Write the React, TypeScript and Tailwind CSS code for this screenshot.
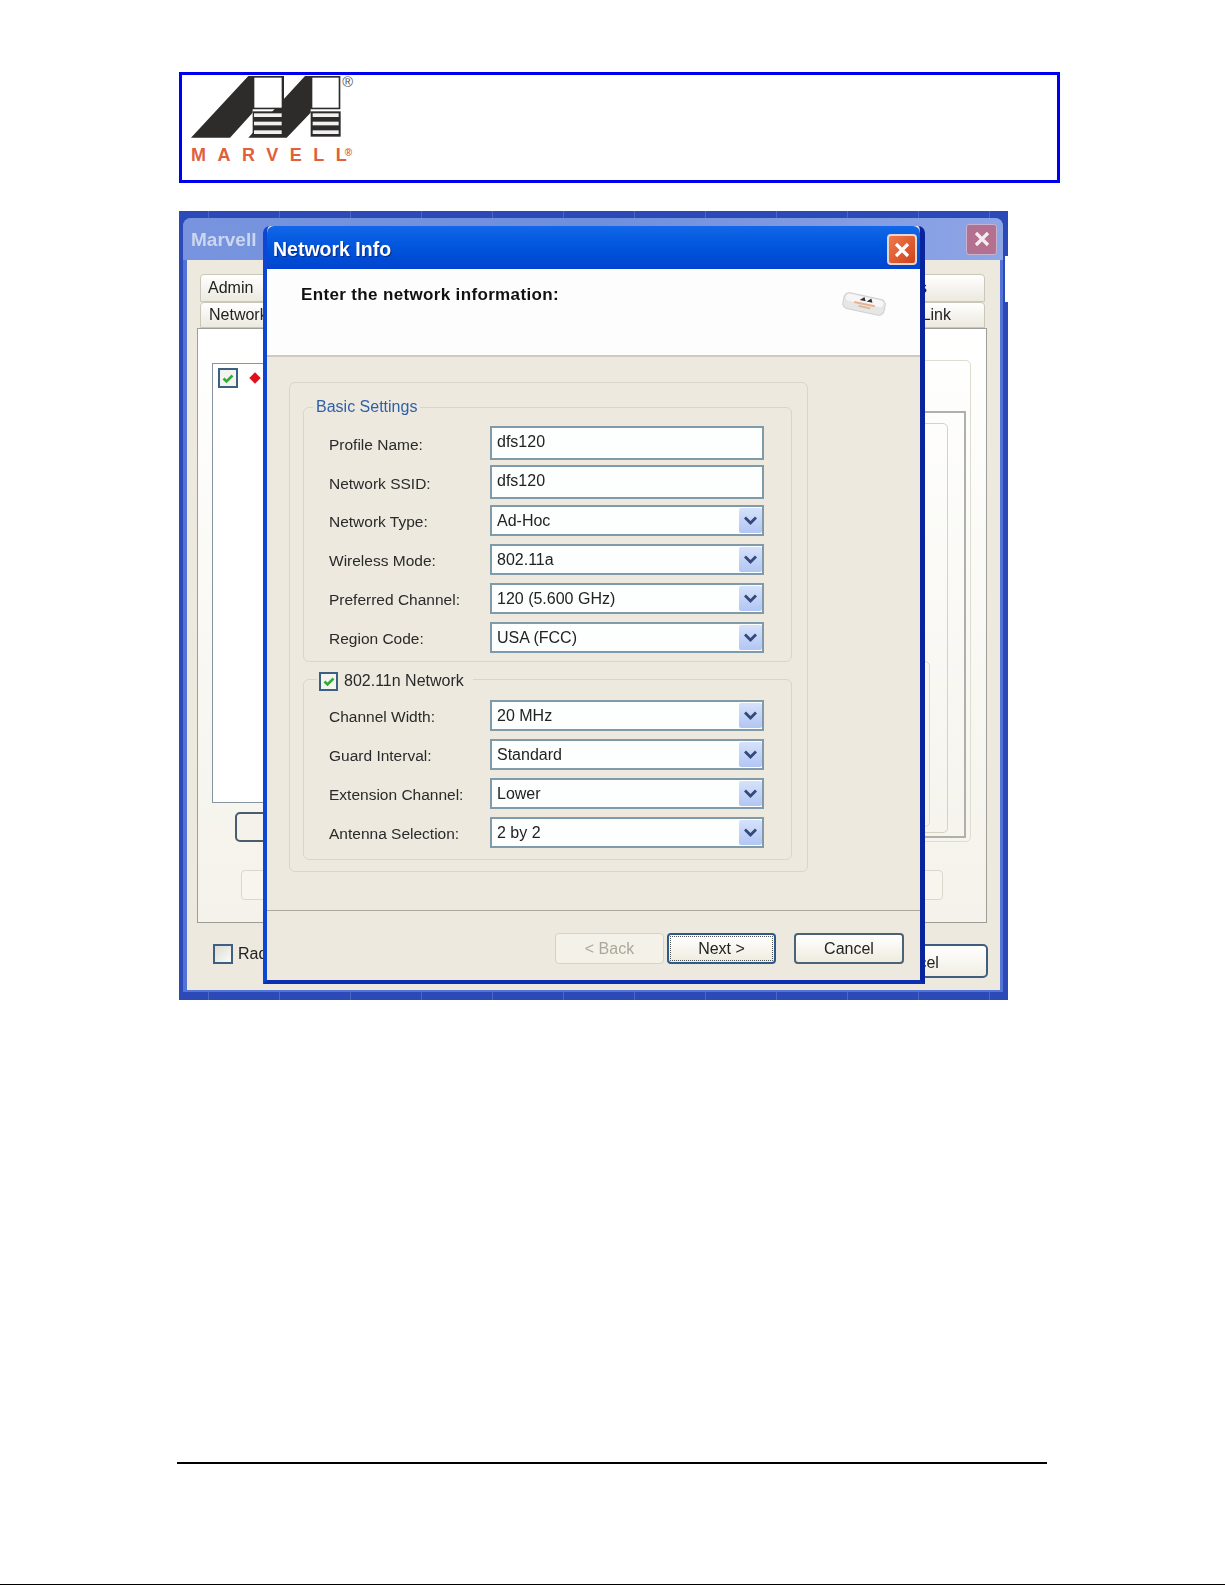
import React from "react";

const font = "font-['Liberation_Sans',Arial,sans-serif]";

function Logo() {
  return (
    <svg width="175" height="73" viewBox="0 15 525 219" className="block shrink-0">
      <polygon points="18,203 190,18 297,18 297,118 203,118 203,128 135,203" fill="#2e2b2b" />
      <polygon points="190,203 360,18 466,18 466,118 377,118 377,128 305,203" fill="#2e2b2b" />
      <rect x="203" y="124" width="92" height="74" fill="#2e2b2b" />
      <rect x="377" y="124" width="90" height="76" fill="#2e2b2b" />
      <rect x="208" y="23" width="82" height="90" fill="#ffffff" />
      <rect x="382" y="23" width="79" height="90" fill="#ffffff" />
      <rect x="207" y="130" width="83" height="11" fill="#f1f1f1" />
      <rect x="207" y="155" width="83" height="11" fill="#f1f1f1" />
      <rect x="207" y="181" width="83" height="11" fill="#f1f1f1" />
      <rect x="383" y="130" width="78" height="11" fill="#f1f1f1" />
      <rect x="383" y="155" width="78" height="11" fill="#f1f1f1" />
      <rect x="383" y="181" width="78" height="11" fill="#f1f1f1" />
      <text x="472" y="50" fontSize="44" fill="#555" fontFamily="Liberation Sans">®</text>
    </svg>
  );
}

function Check({ className }: { className: string }) {
  return (
    <span className={`flex items-center justify-center border-2 border-[#3d5f82] bg-[#f4f4ee] ${className}`}>
      <svg width="14" height="13" viewBox="0 0 14 13">
        <path d="M2.5 6.5 L5.5 9.5 L11.5 3.5" stroke="#35a83c" strokeWidth="2.6" fill="none" />
      </svg>
    </span>
  );
}

function Row({ label, value, select }: { label: string; value: string; select?: boolean }) {
  return (
    <div className="flex items-center">
      <div className="w-[186px] pl-[25px] pt-[3px] text-[15.5px] text-[#2a2a2a] whitespace-nowrap">{label}</div>
      <div
        className={`flex w-[274px] items-center border-2 border-[#7f9aa9] bg-[#fdfefe] pl-[5px] text-[16px] text-[#222] ${
          select ? "h-[31px]" : "h-[34px] pb-[3px]"
        }`}
      >
        <span className="flex-1">{value}</span>
        {select && (
          <span className="flex h-[25px] w-[23px] items-center justify-center rounded-[2px] bg-gradient-to-b from-[#d6e2fa] to-[#b2c6f4]">
            <svg width="15" height="11" viewBox="0 0 15 11">
              <path d="M2 2.5 L7.5 8 L13 2.5" stroke="#34497a" strokeWidth="2.8" fill="none" />
            </svg>
          </span>
        )}
      </div>
    </div>
  );
}

function Ticks() {
  return (
    <div className="flex h-[8px] overflow-hidden">
      {Array.from({ length: 12 }).map((_, i) => (
        <div key={i} className="h-full w-[71px] shrink-0 border-r border-[#4a66c6] first:w-[30px]" />
      ))}
    </div>
  );
}

function BackgroundWindow() {
  return (
    <div className="absolute left-[4px] top-[7px] flex h-[774px] w-[820px] flex-col rounded-t-[8px] bg-[#5473d6]">
      <div className="flex h-[42px] shrink-0 items-center justify-between rounded-t-[8px] bg-gradient-to-r from-[#7894de] via-[#6f8edc] to-[#8ea5e6] pl-[8px] pr-[6px]">
        <span className="pt-[2px] text-[19px] font-bold text-[#cbd7f0]">Marvell</span>
        <span className="flex h-[31px] w-[31px] items-center justify-center rounded-[3px] border border-[#c6b3d0] bg-[#b4718f]">
          <svg width="18" height="18" viewBox="0 0 18 18">
            <path d="M3 3 L15 15 M15 3 L3 15" stroke="#f4ecf0" strokeWidth="3.2" />
          </svg>
        </span>
      </div>
      <div className="ml-[4px] mr-[3px] flex h-[730px] flex-col bg-[#ede9df] pt-[14px]">
        <div className="flex h-[28px] justify-between pl-[13px] pr-[15px] text-[16px] text-[#222]">
          <div className="flex w-[130px] items-center rounded-t-[4px] border border-[#c9c7b9] bg-gradient-to-b from-white to-[#ede9df] pl-[7px]">Admin</div>
          <div className="flex w-[135px] items-center justify-end rounded-t-[4px] border border-[#c9c7b9] bg-gradient-to-b from-white to-[#ede9df] pr-[57px]">s</div>
        </div>
        <div className="flex h-[26px] justify-between pl-[13px] pr-[15px] text-[16px] text-[#222]">
          <div className="flex w-[130px] items-center rounded-t-[4px] border border-[#c9c7b9] bg-gradient-to-b from-white to-[#ede9df] pl-[8px]">Network</div>
          <div className="flex w-[135px] items-center justify-end rounded-t-[4px] border border-[#c9c7b9] bg-gradient-to-b from-white to-[#ede9df] pr-[33px]">Link</div>
        </div>
        <div className="ml-[10px] flex h-[595px] w-[790px] flex-col border border-[#9c9f98] bg-gradient-to-b from-white to-[#f4f2ea] pt-[31px]">
          <div className="flex h-[482px] pl-[14px]">
            <div className="flex w-[250px] flex-col pt-[3px]">
              <div className="flex h-[440px] items-start gap-[13px] border border-[#8795a3] bg-white pl-[5px] pt-[4px]">
                <Check className="h-[20px] w-[20px]" />
                <span className="mt-[6px] h-[8px] w-[8px] rotate-45 bg-[#e0101a]" />
              </div>
              <div className="ml-[23px] mt-[9px] h-[30px] w-[200px] rounded-[5px] border-2 border-[#4a5c6d] bg-[#f4f2ea]" />
            </div>
            <div className="ml-auto mr-[15px] flex h-[482px] w-[400px] justify-end rounded-[5px] border border-[#dfdcd0] pr-[4px] pt-[50px]">
              <div className="flex h-[427px] w-[390px] justify-end border-2 border-[#b0b0ab] pr-[16px] pt-[10px]">
                <div className="flex h-[410px] w-[370px] items-end justify-end rounded-[5px] border border-[#d4d1c5] pb-[5px] pr-[17px]">
                  <div className="h-[166px] w-[340px] rounded-[5px] border border-[#dcd9cd]" />
                </div>
              </div>
            </div>
          </div>
          <div className="ml-[43px] mt-[28px] h-[30px] w-[702px] rounded-[4px] border border-[#dbd8cb] bg-[#f7f5ee]" />
        </div>
        <div className="mt-[21px] flex items-start text-[16px] text-[#222]">
          <span className="ml-[26px] h-[20px] w-[20px] border-2 border-[#3d5f82] bg-gradient-to-br from-[#dcdcd4] to-[#fbfbf8]" />
          <span className="ml-[5px] leading-[20px]">Radio</span>
          <div className="ml-auto mr-[12px] flex h-[34px] w-[148px] items-center justify-center rounded-[5px] border-2 border-[#3f5d7c] bg-gradient-to-b from-white to-[#f0eee2] pt-[3px]">Cancel</div>
        </div>
      </div>
    </div>
  );
}

function Dialog() {
  return (
    <div className="absolute left-[84px] top-[15px] flex h-[758px] w-[662px] flex-col rounded-t-[7px] border-b-[4px] border-l-[4px] border-r-[5px] border-b-[#0a2fb0] border-l-[#0c46d2] border-r-[#0a259c] bg-[#ede9df]">
      <div className="flex h-[43px] shrink-0 items-center justify-between rounded-t-[7px] bg-gradient-to-b from-[#1266e8] via-[#0055dc] to-[#0044cf] pl-[6px] pr-[3px] pt-[4px]">
        <span className="text-[19.5px] font-bold text-white [text-shadow:1px_1px_1px_#0a2a80]">Network Info</span>
        <span className="flex h-[31px] w-[30px] items-center justify-center rounded-[4px] border-2 border-[#e6d6d0] bg-gradient-to-br from-[#ee7a4c] to-[#d0401a]">
          <svg width="18" height="18" viewBox="0 0 18 18">
            <path d="M3 3 L15 15 M15 3 L3 15" stroke="#fff" strokeWidth="3.2" />
          </svg>
        </span>
      </div>
      <div className="flex h-[88px] shrink-0 items-start justify-between border-b-2 border-[#cfcabc] bg-[#fdfdfd] pl-[34px] pr-[33px] pt-[15px]">
        <span className="text-[17px] font-bold leading-[22px] text-[#111] [letter-spacing:0.35px]">Enter the network information:</span>
        <svg width="46" height="28" viewBox="0 0 46 28" className="mt-[6px]">
          <g transform="rotate(12 23 14)">
            <rect x="2" y="6" width="42" height="16" rx="5" fill="#e6e6e6" stroke="#cfcfcf" />
            <rect x="4" y="7" width="38" height="7" rx="3" fill="#f6f6f6" />
            <path d="M18 11 L22 7 L24 11 Z M25 11 L29 7 L31 11 Z" fill="#333" />
            <rect x="13" y="13" width="21" height="2" fill="#ecb08a" />
            <rect x="18" y="16" width="12" height="2" fill="#dcb89c" />
          </g>
        </svg>
      </div>
      <div className="h-[553px] shrink-0 pl-[22px] pt-[25px]">
        <div className="h-[490px] w-[519px] rounded-[6px] border border-[#d9d6c8] pl-[13px] pr-[15px] pt-[14px]">
          <fieldset className="h-[265px] rounded-[6px] border border-[#d9d6c8] pt-[9px]">
            <legend className="ml-[9px] h-[20px] px-[3px] text-[16px] leading-[20px] text-[#2f5fa6]">Basic Settings</legend>
            <div className="flex flex-col gap-[5px]">
              <Row label="Profile Name:" value="dfs120" />
              <Row label="Network SSID:" value="dfs120" />
            </div>
            <div className="mt-[6px] flex flex-col gap-[8px]">
              <Row label="Network Type:" value="Ad-Hoc" select />
              <Row label="Wireless Mode:" value="802.11a" select />
              <Row label="Preferred Channel:" value="120 (5.600 GHz)" select />
              <Row label="Region Code:" value="USA (FCC)" select />
            </div>
          </fieldset>
          <fieldset className="mt-[7px] h-[191px] rounded-[6px] border border-[#d9d6c8] pt-[11px]">
            <legend className="ml-[13px] flex h-[20px] translate-y-[2px] items-center gap-[6px] pl-[2px] pr-[9px] text-[16px] text-[#2a2a2a]">
              <Check className="h-[19px] w-[19px]" />
              802.11n Network
            </legend>
            <div className="flex flex-col gap-[8px]">
              <Row label="Channel Width:" value="20 MHz" select />
              <Row label="Guard Interval:" value="Standard" select />
              <Row label="Extension Channel:" value="Lower" select />
              <Row label="Antenna Selection:" value="2 by 2" select />
            </div>
          </fieldset>
        </div>
      </div>
      <div className="flex flex-1 items-start justify-end border-t border-[#aca899] pr-[16px] pt-[22px] text-[16px]">
        <div className="flex h-[31px] w-[109px] items-center justify-center rounded-[4px] border border-[#d6d3c4] bg-[#f3f1e8] text-[#aca899]">&lt; Back</div>
        <div className="ml-[3px] flex h-[31px] w-[109px] items-center justify-center rounded-[4px] border-2 border-[#2c5a8c] bg-gradient-to-b from-white to-[#eeecdf] text-[#222] outline-1 -outline-offset-4 outline-dotted outline-[#555]">Next &gt;</div>
        <div className="ml-[18px] flex h-[31px] w-[110px] items-center justify-center rounded-[4px] border-2 border-[#4c6275] bg-gradient-to-b from-white to-[#eeecdf] text-[#222]">Cancel</div>
      </div>
    </div>
  );
}

export default function App() {
  return (
    <div className={`flex h-[1585px] w-[1225px] flex-col overflow-hidden bg-white pt-[72px] ${font}`}>
      <div className="ml-[179px] flex h-[111px] w-[881px] shrink-0 flex-col border-[3px] border-[#0000f0] pl-[3px]">
        <Logo />
        <div className="ml-[6px] whitespace-nowrap text-[18px] font-bold leading-[14px] text-[#e0603a]">
          <span className="tracking-[11.5px]">MARVEL</span>L<span className="-ml-[2px] align-top text-[10px] leading-[10px]">®</span>
        </div>
      </div>
      <div className="relative ml-[179px] mt-[28px] flex h-[789px] w-[829px] shrink-0 flex-col justify-between overflow-hidden bg-[#2c49b8] blur-[0.5px]">
        <Ticks />
        <Ticks />
        <div className="absolute right-0 top-[45px] h-[46px] w-[3px] bg-white" />
        <BackgroundWindow />
        <Dialog />
      </div>
      <div className="ml-[177px] mt-[462px] h-[2px] w-[870px] shrink-0 bg-black" />
      <div className="mt-auto h-px w-full shrink-0 bg-black" />
    </div>
  );
}
